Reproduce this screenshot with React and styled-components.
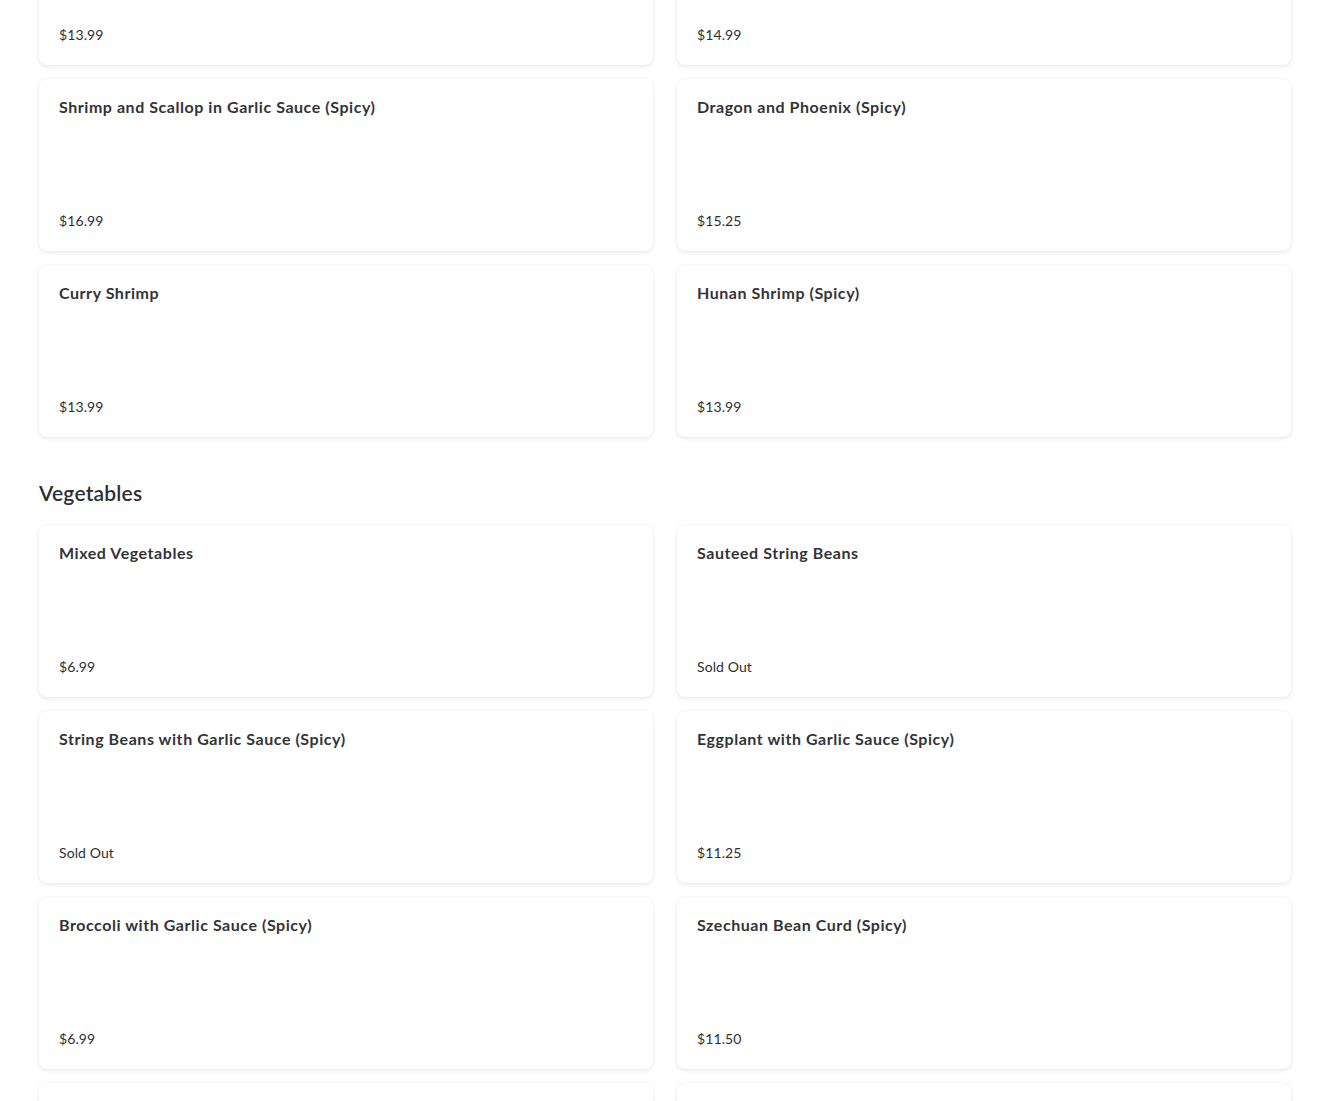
import React from "react";
import styled, { createGlobalStyle } from "styled-components";

const Global = createGlobalStyle`
  html, body { margin: 0; padding: 0; background: #ffffff; }
  body { font-family: "Lato", "Liberation Sans", sans-serif; color: #2e2f33; overflow: hidden; }
`;

const Page = styled.div`
  padding: 0 39px;
  margin-top: -107px;
`;

const Section = styled.section`
  display: flex;
  flex-direction: column;
`;

const Heading = styled.h2`
  margin: 42px 0 18px;
  font-size: 21px;
  line-height: 28px;
  font-weight: 600;
  color: #2e2f33;
  letter-spacing: 0.2px;
`;

const Grid = styled.div`
  display: grid;
  grid-template-columns: 1fr 1fr;
  column-gap: 24px;
  row-gap: 14px;
`;

const Card = styled.div`
  height: 172px;
  box-sizing: border-box;
  padding: 16px 20px 20px;
  border-radius: 8px;
  background: #fff;
  box-shadow: 0 2px 5px rgba(0, 0, 0, 0.07), 0 0 3px rgba(0, 0, 0, 0.05);
  display: flex;
  flex-direction: column;
  justify-content: space-between;
`;

const Title = styled.div`
  font-size: 16px;
  line-height: 24px;
  font-weight: 700;
  color: #333438;
  letter-spacing: 0.55px;
`;

const Price = styled.div`
  font-size: 14px;
  line-height: 20px;
  font-weight: 400;
  color: #2e2f33;
  letter-spacing: 0.1px;
`;

const seafood = [
  ["Kung Pao Shrimp (Spicy)", "$13.99"],
  ["Shrimp with Lobster Sauce", "$14.99"],
  ["Shrimp and Scallop in Garlic Sauce (Spicy)", "$16.99"],
  ["Dragon and Phoenix (Spicy)", "$15.25"],
  ["Curry Shrimp", "$13.99"],
  ["Hunan Shrimp (Spicy)", "$13.99"],
];

const vegetables = [
  ["Mixed Vegetables", "$6.99"],
  ["Sauteed String Beans", "Sold Out"],
  ["String Beans with Garlic Sauce (Spicy)", "Sold Out"],
  ["Eggplant with Garlic Sauce (Spicy)", "$11.25"],
  ["Broccoli with Garlic Sauce (Spicy)", "$6.99"],
  ["Szechuan Bean Curd (Spicy)", "$11.50"],
  ["Bean Curd Home Style", "$10.99"],
  ["Bean Curd with Mixed Vegetables", "$10.99"],
];

const Item = ({ title, price }) => (
  <Card>
    <Title>{title}</Title>
    <Price>{price}</Price>
  </Card>
);

export default function App() {
  return (
    <>
      <Global />
      <Page>
        <Section>
          <Grid>
            {seafood.map(([t, p]) => (
              <Item key={t} title={t} price={p} />
            ))}
          </Grid>
        </Section>
        <Section>
          <Heading>Vegetables</Heading>
          <Grid>
            {vegetables.map(([t, p]) => (
              <Item key={t} title={t} price={p} />
            ))}
          </Grid>
        </Section>
      </Page>
    </>
  );
}
